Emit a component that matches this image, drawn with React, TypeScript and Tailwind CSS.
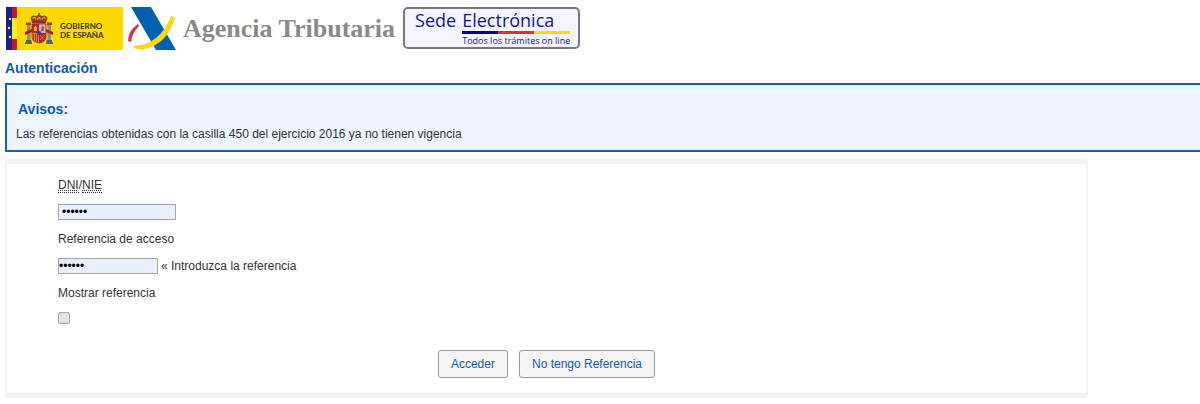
import { useState } from 'react'
import type { ReactNode } from 'react'

function SpainShield() {
  return (
    <svg viewBox="0 0 30 32" className="h-8 w-[30px]" aria-hidden="true">
      {/* crown */}
      <path d="M8 10 L6.5 5 Q8 1.5 12 3 Q15 1 18 3 Q22 1.5 23.5 5 L22 10 Z" fill="#8f3f22" />
      <path d="M8.5 5.5 Q11 3 12 6.5 M13.5 6.5 Q15 2.5 16.5 6.5 M18 6.5 Q19.5 3 21.5 5.5" fill="none" stroke="#e8b21a" strokeWidth="1.2" />
      <path d="M8.5 8.5 H21.5 V10.5 H8.5 Z" fill="#9c1d2b" />
      <path d="M15 0 V3 M14 1 H16" stroke="#6b3a12" strokeWidth="1" />
      {/* pillars */}
      <path d="M3 12 H6.5 V27 H3 Z M23.5 12 H27 V27 H23.5 Z" fill="#a08a78" />
      <path d="M2 9.5 H7 V12 H2 Z M23 9.5 H28 V12 H23 Z" fill="#b0332e" />
      <path d="M2 27 H7.5 V29 H2 Z M22.5 27 H28 V29 H22.5 Z" fill="#51606f" />
      <path d="M1 29 H8 V31 H1 Z M22 29 H29 V31 H22 Z" fill="#4a6f5c" />
      <path d="M1 19 L8 16 V19 L1 22 Z M29 19 L22 16 V19 L29 22 Z" fill="#a81c2b" />
      {/* quarters */}
      <path d="M8 11 H15 V20 H8 Z" fill="#c22332" />
      <path d="M15 11 H22 V20 H15 Z" fill="#d5b7b0" />
      <path d="M8 20 H15 V30 Q8 29 8 24 Z" fill="#d9912a" />
      <path d="M15 20 H22 V24 Q22 29 15 30 Z" fill="#b32133" />
      <path d="M10 18 V14 H11 V13 H12 V14 H13 V18 Z" fill="#e8b21a" />
      <path d="M17 18 L18 13 L20 14 L19.5 18 Z" fill="#8c4468" />
      <path d="M9.5 21 V27 M11.5 21 V28.5 M13.5 21 V29" stroke="#b8202f" strokeWidth="1" />
      <path d="M16 22 L20.5 27 M20.5 22 L16 27" stroke="#dba02d" strokeWidth="0.8" />
      <circle cx="15" cy="20" r="2" fill="#34407c" stroke="#b8202f" strokeWidth="0.6" />
      <path d="M8 11 H22 V24 Q22 29 15 30 Q8 29 8 24 Z" fill="none" stroke="#7d3b24" strokeWidth="0.8" />
    </svg>
  )
}

function GobiernoLogo() {
  return (
    <div className="flex h-[43px] w-[117px] items-center bg-[#fdd900]">
      <svg viewBox="0 0 12 43" className="h-[43px] w-3 shrink-0" aria-hidden="true">
        <path d="M0 0 H6 V43 H0 Z" fill="#1d1f86" />
        <path d="M6 11 H11 V32 H6 Z" fill="#fdee20" />
        <path d="M6 0 H11 V11 H6 Z M6 32 H11 V43 H6 Z" fill="#c8142c" />
        <g fill="#e9e6c8">
          <circle cx="4" cy="12" r="1.2" />
          <circle cx="3" cy="21" r="1.2" />
          <circle cx="4" cy="30" r="1.2" />
        </g>
      </svg>
      <div className="ml-1.5">
        <SpainShield />
      </div>
      <p className="ml-1.5 pt-1 font-['Lato',sans-serif] text-[8px] leading-[9px] font-bold whitespace-nowrap text-[#3a3200]">
        GOBIERNO
        <br />
        DE ESPAÑA
      </p>
    </div>
  )
}

function AgenciaLogo() {
  return (
    <div className="flex items-center">
      <svg viewBox="0 0 50 43" className="h-[43px] w-[50px]" aria-hidden="true">
        <path d="M4 0 H24 L49 43 H29 Z" fill="#0560b0" />
        <path d="M11 17 Q1 24 1 34 L4 35 Q5 26 12 19 Z" fill="#d8343c" />
        <path d="M6 39 Q33 38 44 9 L48 11 Q40 37 18 42 Q9 44 6 39 Z" fill="#fcd514" />
      </svg>
      <span className="ml-1.5 font-['Liberation_Serif',serif] text-[26px] leading-8 font-bold whitespace-nowrap text-[#8a8a88]">
        Agencia Tributaria
      </span>
    </div>
  )
}

function SedeLogo() {
  return (
    <div className="ml-1 grid h-[42px] grid-cols-[auto_auto] content-start gap-x-1.5 rounded-[5px] border-2 border-[#77777c] bg-[#f4f4ff] pr-2 pl-2.5 font-['Open_Sans',sans-serif] whitespace-nowrap text-[#14148c]">
      <span className="text-[18px] leading-[22px]">Sede</span>
      <span className="text-[18px] leading-[22px]">Electrónica</span>
      <div className="col-start-2 flex h-[3px]">
        <span className="flex-1 bg-[#00008c]" />
        <span className="flex-1 bg-[#d8343c]" />
        <span className="flex-1 bg-[#fcd42c]" />
      </div>
      <span className="col-start-2 text-[9px] leading-[13px]">Todos los trámites on line</span>
    </div>
  )
}

function Row({ children }: { children: ReactNode }) {
  return <div className="flex h-[27px] items-center gap-[3px]">{children}</div>
}

function Abbr({ title, children }: { title: string; children: ReactNode }) {
  return (
    <abbr title={title} className="border-b border-dotted border-[#333] leading-3 underline decoration-dotted">
      {children}
    </abbr>
  )
}

const fieldClass = 'h-4 border border-[#a3a6ab] bg-[#e8f0fe] text-xs text-black outline-none'
const buttonClass =
  'h-7 rounded-[3px] border border-[#999] bg-[#f4f4f4] px-3 text-xs text-[#1259b5] hover:bg-[#e8e8e8]'

export default function App() {
  const [dni, setDni] = useState('123456')
  const [reference, setReference] = useState('123456')
  const [visible, setVisible] = useState(false)

  return (
    <div className="bg-white pt-[7px] pb-1.5 pl-[5px] font-['Liberation_Sans',Arial,sans-serif] text-xs text-[#333]">
      <header className="ml-px flex items-start gap-1">
        <GobiernoLogo />
        <AgenciaLogo />
        <SedeLogo />
      </header>

      <main>
        <h1 className="mt-2 text-sm leading-5 font-bold text-[#1259b5]">Autenticación</h1>

        <section className="mt-[5px] border-2 border-r-0 border-[#1560ac] bg-[#edf5ff] pt-3.5 pb-[7px] pl-[9px]">
          <h2 className="ml-0.5 text-sm leading-5 font-bold text-[#1259b5]">Avisos:</h2>
          <p className="mt-[7px] leading-[17px]">
            Las referencias obtenidas con la casilla 450 del ejercicio 2016 ya no tienen vigencia
          </p>
        </section>

        <form
          className="mt-[7px] mr-28 rounded-[3px] border-x-2 border-y-[5px] border-[#f4f4f4] pt-[7px] pb-[15px]"
          onSubmit={(e) => e.preventDefault()}
        >
          <div className="pl-[51px]">
            <Row>
              <label htmlFor="dni">
                <Abbr title="Documento Nacional de Identidad">DNI</Abbr>/
                <Abbr title="Número de Identidad de Extranjero">NIE</Abbr>
              </label>
            </Row>
            <Row>
              <input
                id="dni"
                type="password"
                value={dni}
                onChange={(e) => setDni(e.target.value)}
                className={`${fieldClass} w-[118px] px-[3px]`}
              />
            </Row>
            <Row>
              <label htmlFor="reference">Referencia de acceso</label>
            </Row>
            <Row>
              <input
                id="reference"
                type={visible ? 'text' : 'password'}
                value={reference}
                onChange={(e) => setReference(e.target.value)}
                className={`${fieldClass} w-[100px]`}
              />
              <span>« Introduzca la referencia</span>
            </Row>
            <Row>
              <label htmlFor="show-reference">Mostrar referencia</label>
            </Row>
            <div className="flex pt-[6px]">
              <input
                id="show-reference"
                type="checkbox"
                checked={visible}
                onChange={(e) => setVisible(e.target.checked)}
                className="size-3 appearance-none rounded-xs border border-[#a5a5a5] bg-[#e0e0e0] checked:bg-[#1259b5]"
              />
            </div>
          </div>

          <div className="mt-[26px] flex justify-center gap-[11px]">
            <button type="submit" className={buttonClass}>
              Acceder
            </button>
            <button type="button" className={buttonClass}>
              No tengo Referencia
            </button>
          </div>
        </form>
      </main>
    </div>
  )
}
